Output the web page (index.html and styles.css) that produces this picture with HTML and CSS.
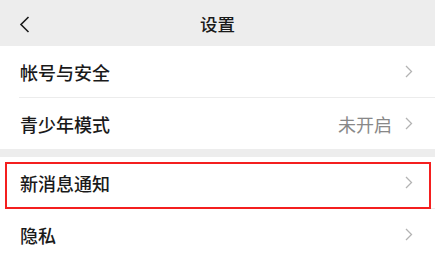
FILE: index.html
```html
<!DOCTYPE html>
<html lang="zh-CN">
<head>
<meta charset="utf-8">
<title>设置</title>
<link rel="stylesheet" href="styles.css">
</head>
<body>
<header class="nav">
  <span class="back">
    <svg width="11" height="17" viewBox="0 0 11 17"><polyline points="9.5,1 2,8.5 9.5,16" fill="none" stroke="#1a1a1a" stroke-width="1.6"/></svg>
  </span>
  <h1 class="title">设置</h1>
  <span></span>
</header>
<section class="group">
  <div class="row"><span class="label">帐号与安全</span><span class="right"><svg class="chev" width="8" height="13" viewBox="0 0 8 13"><polyline points="1,1 6.5,6.5 1,12" fill="none" stroke="#b3b3b3" stroke-width="1.3"/></svg></span></div>
  <div class="row"><span class="label">青少年模式</span><span class="right"><span class="value">未开启</span><svg class="chev" width="8" height="13" viewBox="0 0 8 13"><polyline points="1,1 6.5,6.5 1,12" fill="none" stroke="#b3b3b3" stroke-width="1.3"/></svg></span></div>
</section>
<section class="group">
  <div class="row highlighted"><span class="label">新消息通知</span><span class="right"><svg class="chev" width="8" height="13" viewBox="0 0 8 13"><polyline points="1,1 6.5,6.5 1,12" fill="none" stroke="#b3b3b3" stroke-width="1.3"/></svg></span><span class="mark"></span></div>
  <div class="row"><span class="label">隐私</span><span class="right"><svg class="chev" width="8" height="13" viewBox="0 0 8 13"><polyline points="1,1 6.5,6.5 1,12" fill="none" stroke="#b3b3b3" stroke-width="1.3"/></svg></span></div>
</section>
</body>
</html>
```
FILE: styles.css
```css
html, body {
  margin: 0;
  padding: 0;
  background: #ededed;
  font-family: "Noto Sans CJK SC", "Noto Sans", sans-serif;
  color: #1a1a1a;
}
.nav {
  height: 46px;
  display: grid;
  grid-template-columns: 1fr auto 1fr;
  align-items: center;
  background: #ededed;
}
.back {
  display: flex;
  align-items: center;
  padding-left: 19px;
  padding-top: 2px;
}
.title {
  margin: 0;
  font-size: 17.5px;
  font-weight: 500;
  line-height: 1;
  padding-top: 1px;
}
.group {
  background: #fff;
}
.group + .group {
  margin-top: 8px;
}
.row {
  position: relative;
  height: 51px;
  display: flex;
  align-items: center;
  justify-content: space-between;
  padding: 0 22px 0 20px;
  font-size: 18px;
}
.row + .row {
  margin-top: 1px;
}
.row + .row::before {
  content: "";
  position: absolute;
  left: 19px;
  right: 0;
  top: -1px;
  height: 1px;
  background: #ececec;
}
.group:last-child .row:last-child::after {
  content: "";
  position: absolute;
  left: 19px;
  right: 0;
  bottom: -1px;
  height: 1px;
  background: #ececec;
}
.label {
  line-height: 1;
  padding-top: 1px;
  font-weight: 500;
}
.right {
  display: flex;
  align-items: center;
  gap: 13px;
}
.value {
  color: #888;
  font-size: 18px;
  line-height: 1;
}
.chev {
  display: block;
}
.mark {
  position: absolute;
  z-index: 5;
  left: 5px;
  right: 4px;
  top: 5px;
  height: 47px;
  box-sizing: border-box;
  border: 2px solid #f41f1f;
  pointer-events: none;
}
```
